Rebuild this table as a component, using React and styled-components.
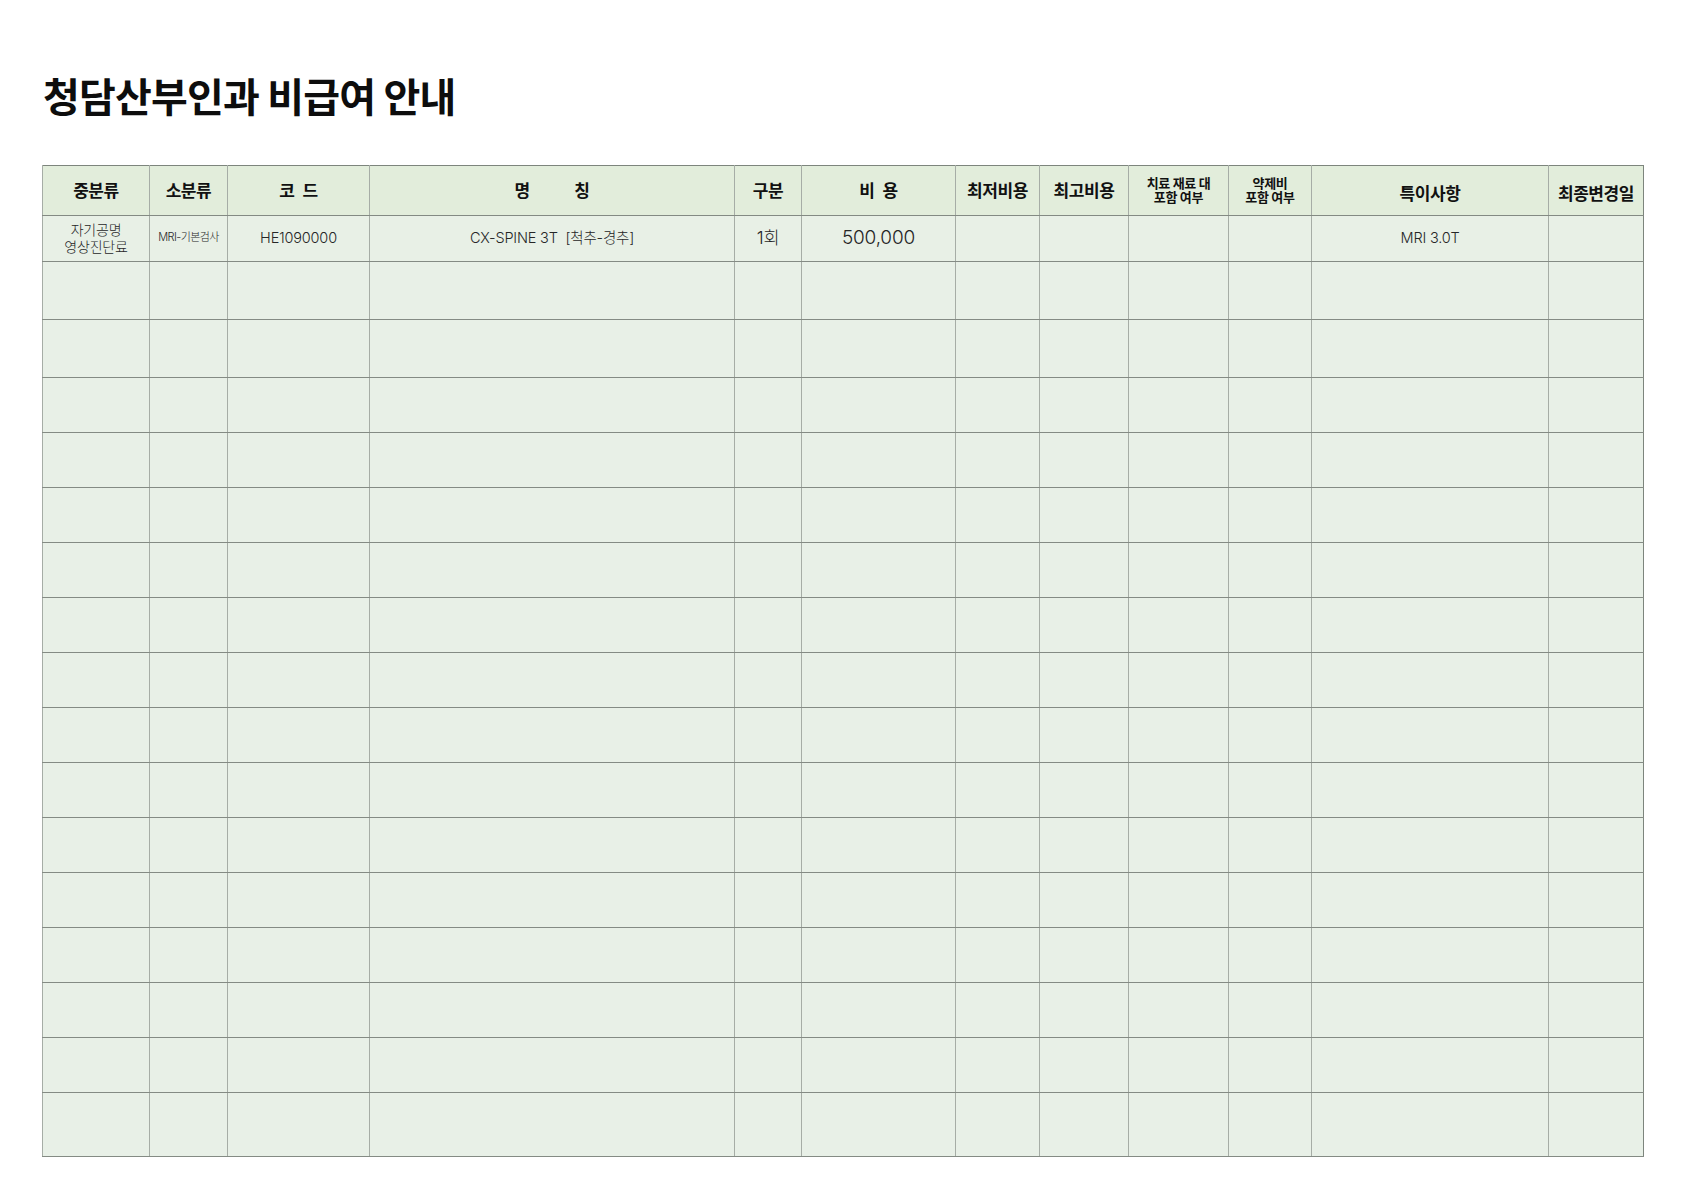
import React from 'react';
import styled, { createGlobalStyle } from 'styled-components';

const GlobalStyle = createGlobalStyle`
  html, body {
    margin: 0;
    padding: 0;
    background: #ffffff;
  }
  body {
    font-family: Inter, "Noto Sans CJK KR", "Noto Sans", sans-serif;
    color: #111;
  }
`;

// 열 너비 (px)
const columns = [107, 78, 142, 365, 67, 154, 84, 89, 100, 83, 237, 95];

const headers = [
  { label: '중분류' },
  { label: '소분류' },
  { label: '코\u2002드' },
  { label: '명\u3000\u3000\u2002\u2009칭' },
  { label: '구분' },
  { label: '비\u2002용' },
  { label: '최저비용' },
  { label: '최고비용' },
  { label: '치료 재료 대\n포함 여부', small: true },
  { label: '약제비\n포함 여부', small: true },
  { label: '특이사항', low: true },
  { label: '최종변경일', low: true },
];

const dataRow = [
  { text: '자기공명\n영상진단료', size: 14 },
  { text: 'MRI-기본검사', size: 11, tight: true },
  { text: 'HE1090000', size: 14.5 },
  { text: 'CX-SPINE 3T\u00a0\u00a0[척추-경추]', size: 14.5 },
  { text: '1회', size: 17.5 },
  { text: '500,000', size: 19 },
  { text: '' },
  { text: '' },
  { text: '' },
  { text: '' },
  { text: 'MRI 3.0T', size: 14.5 },
  { text: '' },
];

// 빈 행 높이: 위 두 줄은 조금 높고 마지막 줄은 더 높다
const emptyRows = Array.from({ length: 16 }, (_, i) =>
  i < 2 ? 58 : i === 15 ? 64 : 55
);

const App = () => {
  return (
    <Page>
      <GlobalStyle />
      <Title>청담산부인과 비급여 안내</Title>
      <PriceTable>
        <colgroup>
          {columns.map((w, i) => (
            <col key={i} style={{ width: w }} />
          ))}
        </colgroup>
        <thead>
          <HeadRow>
            {headers.map((h, i) => (
              <HeadCell key={i} $small={h.small} $low={h.low}>
                {h.label}
              </HeadCell>
            ))}
          </HeadRow>
        </thead>
        <tbody>
          <DataRow>
            {dataRow.map((c, i) => (
              <Cell key={i} $size={c.size} $tight={c.tight}>
                {c.text}
              </Cell>
            ))}
          </DataRow>
          {emptyRows.map((h, r) => (
            <EmptyRow key={r} $height={h}>
              {columns.map((_, i) => (
                <Cell key={i} />
              ))}
            </EmptyRow>
          ))}
        </tbody>
      </PriceTable>
    </Page>
  );
};

const Page = styled.div`
  padding: 68px 0 0 42px;
`;

const Title = styled.h1`
  margin: 0 0 42px 1px;
  font-family: "Noto Sans CJK KR", sans-serif;
  font-size: 40px;
  font-weight: 700;
  letter-spacing: -0.8px;
  line-height: 55px;
  color: #0d0d0d;
`;

const PriceTable = styled.table`
  width: 1601px;
  table-layout: fixed;
  border-collapse: collapse;
  border: 1px solid #7d857d;
`;

const HeadRow = styled.tr`
  height: 50px;
  background: #e2eddb;
`;

const HeadCell = styled.th`
  padding: ${(p) => (p.$low ? '5px 0 0' : '0 0 2px')};
  border-left: 1px solid #a6ada6;
  border-bottom: 1px solid #838a83;
  text-align: center;
  vertical-align: middle;
  white-space: pre-line;
  font-family: "Noto Sans CJK KR", sans-serif;
  font-size: ${(p) => (p.$small ? '13px' : '17px')};
  line-height: ${(p) => (p.$small ? '14px' : '20px')};
  font-weight: 700;
  letter-spacing: ${(p) => (p.$small ? '-0.3px' : '-0.4px')};
  color: #111;
`;

const DataRow = styled.tr`
  height: 46px;
  background: #e8f0e6;
`;

const EmptyRow = styled.tr`
  height: ${(p) => p.$height}px;
  background: #e8f0e7;
`;

const Cell = styled.td`
  padding: 0 0 2px;
  border-left: 1px solid #a6ada6;
  border-bottom: 1px solid #848b84;
  text-align: center;
  vertical-align: middle;
  white-space: pre-line;
  font-size: ${(p) => (p.$size ? `${p.$size}px` : '15px')};
  line-height: 17px;
  font-weight: 300;
  letter-spacing: ${(p) => (p.$tight ? '-0.6px' : '-0.2px')};
  color: #262626;
`;

export default App;
